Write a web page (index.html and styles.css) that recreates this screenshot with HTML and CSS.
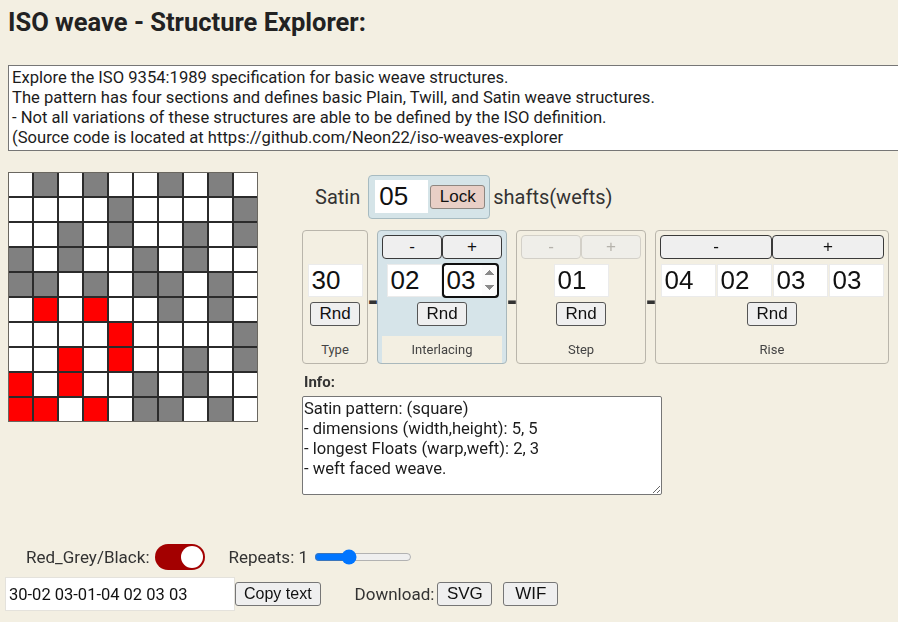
FILE: index.html
```html
<!DOCTYPE html>
<html lang="en">
<head>
<meta charset="utf-8">
<title>ISO weave - Structure Explorer</title>
<link rel="stylesheet" href="styles.css">
</head>
<body>
<h1 class="title">ISO weave - Structure Explorer:</h1>
<textarea class="intro" rows="4">Explore the ISO 9354:1989 specification for basic weave structures.
The pattern has four sections and defines basic Plain, Twill, and Satin weave structures.
- Not all variations of these structures are able to be defined by the ISO definition.
(Source code is located at https://github.com/Neon22/iso-weaves-explorer</textarea>

<div class="main">
  <div class="weave">
    <div class="c"></div><div class="c g"></div><div class="c"></div><div class="c g"></div><div class="c"></div><div class="c"></div><div class="c g"></div><div class="c"></div><div class="c g"></div><div class="c"></div>
    <div class="c"></div><div class="c"></div><div class="c"></div><div class="c"></div><div class="c g"></div><div class="c"></div><div class="c"></div><div class="c"></div><div class="c"></div><div class="c g"></div>
    <div class="c"></div><div class="c"></div><div class="c g"></div><div class="c"></div><div class="c g"></div><div class="c"></div><div class="c"></div><div class="c g"></div><div class="c"></div><div class="c g"></div>
    <div class="c g"></div><div class="c"></div><div class="c g"></div><div class="c"></div><div class="c"></div><div class="c g"></div><div class="c"></div><div class="c g"></div><div class="c"></div><div class="c"></div>
    <div class="c g"></div><div class="c g"></div><div class="c"></div><div class="c g"></div><div class="c"></div><div class="c g"></div><div class="c g"></div><div class="c"></div><div class="c g"></div><div class="c"></div>
    <div class="c"></div><div class="c r"></div><div class="c"></div><div class="c r"></div><div class="c"></div><div class="c"></div><div class="c g"></div><div class="c"></div><div class="c g"></div><div class="c"></div>
    <div class="c"></div><div class="c"></div><div class="c"></div><div class="c"></div><div class="c r"></div><div class="c"></div><div class="c"></div><div class="c"></div><div class="c"></div><div class="c g"></div>
    <div class="c"></div><div class="c"></div><div class="c r"></div><div class="c"></div><div class="c r"></div><div class="c"></div><div class="c"></div><div class="c g"></div><div class="c"></div><div class="c g"></div>
    <div class="c r"></div><div class="c"></div><div class="c r"></div><div class="c"></div><div class="c"></div><div class="c g"></div><div class="c"></div><div class="c g"></div><div class="c"></div><div class="c"></div>
    <div class="c r"></div><div class="c r"></div><div class="c"></div><div class="c r"></div><div class="c"></div><div class="c g"></div><div class="c g"></div><div class="c"></div><div class="c g"></div><div class="c"></div>
  </div>

  <div class="controls">
    <div class="satin-row">
      <span class="satin-label">Satin</span>
      <div class="shafts-box">
        <input class="num" type="text" value="05">
        <button class="btn lock">Lock</button>
      </div>
      <span class="satin-label shafts">shafts(wefts)</span>
    </div>

    <div class="panels">
      <div class="panel panel-type">
        <div class="btn-row spacer"></div>
        <div class="inputs"><input class="num" type="text" value="30"></div>
        <button class="btn rnd">Rnd</button>
        <div class="panel-label">Type</div>
      </div>
      <span class="dash">-</span>
      <div class="panel panel-mid active">
        <div class="btn-row">
          <button class="btn step">-</button>
          <button class="btn step">+</button>
        </div>
        <div class="inputs">
          <input class="num" type="text" value="02">
          <input class="num focused" type="number" value="03" autofocus>
        </div>
        <button class="btn rnd">Rnd</button>
        <div class="panel-label">Interlacing</div>
      </div>
      <span class="dash">-</span>
      <div class="panel panel-mid">
        <div class="btn-row">
          <button class="btn step" disabled>-</button>
          <button class="btn step" disabled>+</button>
        </div>
        <div class="inputs">
          <input class="num" type="text" value="01">
        </div>
        <button class="btn rnd">Rnd</button>
        <div class="panel-label">Step</div>
      </div>
      <span class="dash">-</span>
      <div class="panel panel-rise">
        <div class="btn-row">
          <button class="btn step">-</button>
          <button class="btn step">+</button>
        </div>
        <div class="inputs">
          <input class="num" type="text" value="04">
          <input class="num" type="text" value="02">
          <input class="num" type="text" value="03">
          <input class="num" type="text" value="03">
        </div>
        <button class="btn rnd">Rnd</button>
        <div class="panel-label">Rise</div>
      </div>
    </div>

    <div class="info">
      <div class="info-label">Info:</div>
      <textarea class="info-text">Satin pattern: (square)
- dimensions (width,height): 5, 5
- longest Floats (warp,weft): 2, 3
- weft faced weave.</textarea>
    </div>
  </div>
</div>

<div class="bottom">
  <div class="row row-opts">
    <span class="opt-label">Red_Grey/Black:</span>
    <span class="switch"><span class="knob"></span></span>
    <span class="opt-label repeats">Repeats: 1</span>
    <input class="range" type="range" min="0" max="3" value="1">
  </div>
  <div class="row row-out">
    <input class="code" type="text" value="30-02 03-01-04 02 03 03">
    <button class="btn copy">Copy text</button>
    <span class="opt-label download">Download:</span>
    <button class="btn dl">SVG</button>
    <button class="btn dl">WIF</button>
  </div>
</div>
</body>
</html>
```

FILE: styles.css
```css
html {
  overflow: hidden;
}

body {
  margin: 0;
  padding: 7px 8px 0 8px;
  background: #f3efe2;
  font-family: Roboto, "Liberation Sans", sans-serif;
  color: #222;
}

.title {
  margin: 0;
  font-size: 25.5px;
  line-height: 30px;
  font-weight: 700;
  color: #222;
}

.intro {
  display: block;
  margin: 28px 0 0 0;
  width: 900px;
  height: 86px;
  box-sizing: border-box;
  padding: 2px 3px;
  border: 1px solid #767676;
  border-radius: 0;
  background: #fff;
  font-family: Roboto, sans-serif;
  font-size: 16.6px;
  line-height: 20px;
  color: #1c1c1c;
  resize: none;
}

.main {
  display: flex;
  align-items: flex-start;
  margin-top: 21px;
  gap: 44px;
}

.weave {
  display: grid;
  grid-template-columns: repeat(10, 23px);
  grid-auto-rows: 23px;
  gap: 2px;
  border: 1px solid #6a6760;
  background: #2b2b2b;
}

.c {
  background: #fff;
}

.c.g {
  background: #808080;
}

.c.r {
  background: #ff0000;
}

.controls {
  display: flex;
  flex-direction: column;
  padding-top: 3px;
}

.satin-row {
  display: flex;
  align-items: center;
  margin-left: 13px;
}

.satin-label {
  font-size: 20px;
  color: #333;
}

.shafts-box {
  display: flex;
  align-items: center;
  gap: 2px;
  margin-left: 8px;
  margin-right: 3px;
  padding: 4px 4px 5px 6px;
  background: #d5e4e8;
  border: 1px solid #a7bbc1;
  border-radius: 4px;
}

.num {
  width: 55px;
  height: 33px;
  box-sizing: border-box;
  padding: 0 3px;
  border: 1px solid #ebebeb;
  background: #fff;
  font-family: "Liberation Sans", Arial, sans-serif;
  font-size: 26px;
  color: #111;
  outline: none;
}

.shafts-box .num {
  width: 53px;
  border-color: #fff;
}

.btn {
  height: 24px;
  box-sizing: border-box;
  padding: 0 6px;
  border: 1px solid #767676;
  border-radius: 3px;
  background: #efefef;
  font-family: "Liberation Sans", Arial, sans-serif;
  font-size: 17px;
  color: #111;
}

.lock {
  width: 55px;
  background: #e9cfc6;
  border-color: #8e8680;
}

.panels {
  display: flex;
  align-items: stretch;
  margin-top: 11px;
}

.panel {
  display: flex;
  flex-direction: column;
  align-items: center;
  box-sizing: border-box;
  padding: 4px 4px 0 4px;
  border: 1px solid #b9b5ab;
  border-radius: 4px;
}

.panel-type {
  width: 66px;
}

.panel-mid {
  width: 130px;
}

.panel-rise {
  width: 234px;
}

.panel.active {
  background: #d6e4e9;
  border-color: #a9b8bc;
}

.btn-row {
  display: flex;
  align-self: stretch;
  height: 24px;
}

.btn-row .step {
  flex: 1;
  padding: 0;
  border-color: #3a3a3a;
  border-radius: 4px;
  font-size: 17px;
}

.btn-row .step:disabled {
  background: #efeee9;
  border-color: #d3d0c8;
  color: #b5b2ab;
}

.inputs {
  display: flex;
  gap: 1px;
  margin-top: 5px;
}

.num.focused {
  outline: 2px solid #101010;
  outline-offset: -1px;
  border-radius: 3px;
  border-color: #101010;
  padding-right: 0;
}

.rnd {
  width: 50px;
  margin-top: 5px;
  padding: 0;
  border-color: #555;
}

.panel-label {
  align-self: stretch;
  height: 27px;
  margin-top: 10px;
  background: #f3efe2;
  font-size: 13px;
  line-height: 27px;
  text-align: center;
  color: #444;
}

.panel:not(.active) .panel-label {
  background: transparent;
}

.dash {
  width: 9px;
  align-self: center;
  margin-top: 6px;
  font-family: "Liberation Sans", Arial, sans-serif;
  font-size: 30px;
  font-weight: 700;
  line-height: 1;
  text-align: center;
  color: #333;
}

.info {
  margin-top: 8px;
}

.info-label {
  margin-left: 2px;
  font-size: 15px;
  font-weight: 700;
  line-height: 20px;
  color: #333;
}

.info-text {
  display: block;
  margin-top: 4px;
  width: 360px;
  height: 99px;
  box-sizing: border-box;
  padding: 2px 1px;
  border: 1px solid #767676;
  border-radius: 2px;
  background: #fff;
  font-family: Roboto, sans-serif;
  font-size: 16.6px;
  line-height: 20px;
  color: #1c1c1c;
}

.bottom {
  margin-top: 48px;
}

.row {
  display: flex;
  align-items: center;
}

.row-opts {
  padding-left: 18px;
  height: 28px;
}

.opt-label {
  font-size: 17px;
  color: #333;
}

.switch {
  position: relative;
  display: inline-block;
  width: 50px;
  height: 26px;
  margin-left: 5px;
  box-sizing: border-box;
  border-radius: 13px;
  background: #a30000;
}

.knob {
  position: absolute;
  right: 2px;
  top: 2px;
  width: 22px;
  height: 22px;
  border-radius: 50%;
  background: #fff;
}

.repeats {
  margin-left: 24px;
}

.range {
  width: 98px;
  margin: 0 0 0 6px;
}

.row-out {
  margin-top: 6px;
  margin-left: -3px;
}

.code {
  width: 230px;
  height: 34px;
  box-sizing: border-box;
  padding: 0 3px;
  border: 1px solid #e4e2dc;
  background: #fff;
  font-family: Roboto, sans-serif;
  font-size: 16.5px;
  color: #111;
}

.copy {
  padding: 0 8px;
  font-size: 16px;
}

.download {
  margin-left: 34px;
  margin-right: 3px;
}

.dl {
  width: 55px;
  font-size: 17px;
  margin-right: 11px;
}
```
